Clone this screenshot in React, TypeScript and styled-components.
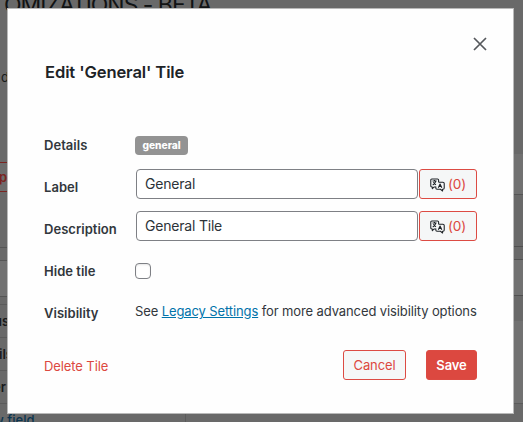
import React from 'react';
import styled, { createGlobalStyle } from 'styled-components';

const Global = createGlobalStyle`
  * { box-sizing: border-box; }
  html, body { margin: 0; padding: 0; overflow: hidden; background: #696969; }
  body { font-family: Inter, sans-serif; font-size: 13px; color: #32373c; }
`;

const Screen = styled.div`
  position: relative;
  width: 523px;
  height: 422px;
  overflow: hidden;
`;

const Page = styled.div`
  display: grid;
  grid-template-columns: 186px 1fr 30px;
  grid-template-rows: 33px 389px;
  height: 422px;
  background: #696969;
`;

const PageTitle = styled.div`
  grid-column: 1 / -1;
  height: 44px;
  margin-top: -10px;
  padding-left: 4px;
  border-bottom: 1px solid #4f4f4f;
  font-size: 23px;
  line-height: 31px;
  letter-spacing: -1.02px;
  white-space: nowrap;
  color: #111314;
`;

const Column = styled.div<{ $divided?: boolean }>`
  display: flex;
  flex-direction: column;
  overflow: hidden;
  border-right: ${p => (p.$divided ? '1px solid #5b5b5b' : '0')};
`;

const Band = styled.div<{ $h: number; $bg?: string; $line?: string }>`
  flex: none;
  height: ${p => p.$h}px;
  background: ${p => p.$bg || '#696969'};
  border-bottom: ${p => (p.$line ? `1px solid ${p.$line}` : '0')};
  line-height: ${p => p.$h}px;
  white-space: nowrap;
`;

const Clipped = styled.span<{ $shift?: number; $color?: string; $weight?: number }>`
  display: inline-block;
  margin-left: ${p => p.$shift || 0}px;
  color: ${p => p.$color || '#17191b'};
  font-weight: ${p => p.$weight || 400};
`;

const PageButton = styled.div`
  flex: none;
  height: 30px;
  width: 60px;
  border: 1px solid #7a2420;
  border-left: 0;
  background: #6d6d6d;
  color: #7a2420;
  line-height: 28px;
  font-weight: 600;
  text-indent: -1px;
`;

const Modal = styled.section`
  position: absolute;
  left: 7px;
  top: 8px;
  width: 507px;
  height: 406px;
  border: 1px solid #b9b9b9;
  background: #fefefe;
  padding: 27px 36px 0;
`;

const Close = styled.button`
  display: block;
  margin: 0 -11px 0 auto;
  width: 16px;
  height: 16px;
  padding: 0;
  border: 0;
  background: none;
`;

const Title = styled.h3`
  margin: 9px 0 43px 1px;
  height: 22px;
  font-size: 16.6px;
  line-height: 22px;
  font-weight: 600;
  letter-spacing: -0.13px;
  color: #1d2327;
`;

const Form = styled.div`
  margin-top: -4px;
`;

const Row = styled.div`
  display: grid;
  grid-template-columns: 91px 1fr;
  align-items: center;
  height: 42px;
`;

const RowLabel = styled.label`
  padding-top: 3px;
  font-weight: 600;
  letter-spacing: 0.03px;
`;

const Badge = styled.span`
  justify-self: start;
  height: 19px;
  width: 53px;
  margin-top: 5px;
  border-radius: 4px;
  background: #939393;
  color: #fff;
  font-size: 10.2px;
  font-weight: 800;
  line-height: 19px;
  text-align: center;
`;

const Field = styled.div`
  display: flex;
  gap: 1px;
  padding-left: 1px;
  margin-top: -2px;
`;

const Input = styled.input`
  width: 282px;
  height: 30px;
  padding: 0 8px 1px;
  border: 1px solid #7e8085;
  border-radius: 4px;
  background: #fff;
  color: #2c3338;
  font: 14px Inter, sans-serif;
  letter-spacing: -0.2px;
`;

const Button = styled.button<{ $primary?: boolean; $w: number }>`
  display: flex;
  align-items: center;
  justify-content: center;
  gap: 3px;
  width: ${p => p.$w}px;
  height: 30px;
  padding: 0;
  border: 1px solid #dc4b43;
  border-radius: 3px;
  background: ${p => (p.$primary ? '#dc4840' : '#f5f7f7')};
  color: ${p => (p.$primary ? '#fff' : '#dc4840')};
  font-family: Inter, sans-serif;
  font-size: 13px;
  font-weight: ${p => (p.$primary ? 600 : 400)};
  letter-spacing: -0.1px;
`;

const Count = styled.span`
  font-size: 13.6px;
`;

const Checkbox = styled.input`
  appearance: none;
  margin: 4px 0 0;
  width: 16px;
  height: 16px;
  border: 1px solid #7e8085;
  border-radius: 4px;
  background: #fff;
  box-shadow: inset 0 1px 2px rgba(0, 0, 0, 0.1);
`;

const Note = styled.p`
  margin: 0;
  letter-spacing: -0.11px;
  white-space: nowrap;
`;

const Link = styled.a`
  color: #0073aa;
  text-decoration: underline;
`;

const Footer = styled.div`
  display: flex;
  align-items: center;
  gap: 20px;
  margin-top: 18px;
`;

const Delete = styled.a`
  margin-right: auto;
  padding-top: 2px;
  color: #dc4840;
  letter-spacing: -0.1px;
`;

const Glyph = styled.svg`
  margin-top: 2px;
`;

const TranslateIcon = () => (
  <Glyph width="15" height="14" viewBox="0 0 15.5 14" fill="none" stroke="#1d2327" strokeWidth="1.1" strokeLinejoin="round">
    <path d="M5.8 9H4.4L2.4 10.8V9H1.9Q.8 9 .8 7.9V1.9Q.8.8 1.9.8H7.8Q8.9.8 8.9 1.9V4.2" />
    <path d="M8.9 4.2H13.4Q14.7 4.2 14.7 5.5V10.2Q14.7 11.4 13.5 11.4H13V13.2L10.8 11.4H7.2Q6 11.4 6 10.2V8.6" />
    <path d="M2.6 2.9H6.8M4.7 1.9V2.9M6 2.9Q5.4 5.6 2.8 7M3.5 4.2Q4.3 5.9 6.2 6.7" />
    <path d="M8.6 9.9L10.4 5.9L12.2 9.9M9.2 8.6H11.6" />
  </Glyph>
);

const TranslateField = ({ value }: { value: string }) => (
  <Field>
    <Input readOnly value={value} />
    <Button $w={58}>
      <TranslateIcon />
      <Count>(0)</Count>
    </Button>
  </Field>
);

export default function App() {
  return (
    <>
      <Global />
      <Screen>
        <Page>
          <PageTitle>OMIZATIONS - BETA</PageTitle>
          <Column $divided>
            <Band $h={88}><Clipped $shift={1}>d</Clipped></Band>
            <Band $h={41} />
            <PageButton>p</PageButton>
            <Band $h={56} $line="#555" />
            <Band $h={13} $line="#555" />
            <Band $h={36} $bg="#717171" $line="#555" />
            <Band $h={8} $line="#5b5b5b" />
            <Band $h={33} $line="#5b5b5b"><Clipped $shift={-6} $weight={600}>us</Clipped></Band>
            <Band $h={33} $line="#5b5b5b"><Clipped $shift={-1} $weight={600}>ils</Clipped></Band>
            <Band $h={33} $line="#5b5b5b"><Clipped $shift={-7} $weight={600}>er</Clipped></Band>
            <Band $h={33}><Clipped $shift={-7} $color="#0b3550" $weight={500}>w field</Clipped></Band>
          </Column>
          <Column />
          <Column>
            <Band $h={121} />
            <Band $h={41} $bg="#717171" $line="#555" />
            <Band $h={52} $line="#505050" />
            <Band $h={13} $line="#505050" />
            <Band $h={36} $bg="#717171" $line="#505050" />
            <Band $h={25} />
            <Band $h={83} $bg="#717171" $line="#5b5b5b" />
          </Column>
        </Page>
        <Modal>
          <Close aria-label="Close">
            <svg width="16" height="16" viewBox="0 0 16 16" stroke="#55585c" strokeWidth="1.7" fill="none">
              <path d="M2 2L14 14M14 2L2 14" />
            </svg>
          </Close>
          <Title>Edit 'General' Tile</Title>
          <Form>
            <Row>
              <RowLabel>Details</RowLabel>
              <Badge>general</Badge>
            </Row>
            <Row>
              <RowLabel>Label</RowLabel>
              <TranslateField value="General" />
            </Row>
            <Row>
              <RowLabel>Description</RowLabel>
              <TranslateField value="General Tile" />
            </Row>
            <Row>
              <RowLabel>Hide tile</RowLabel>
              <Checkbox type="checkbox" />
            </Row>
            <Row>
              <RowLabel>Visibility</RowLabel>
              <Note>See <Link>Legacy Settings</Link> for more advanced visibility options</Note>
            </Row>
          </Form>
          <Footer>
            <Delete>Delete Tile</Delete>
            <Button $w={63}>Cancel</Button>
            <Button $primary $w={51}>Save</Button>
          </Footer>
        </Modal>
      </Screen>
    </>
  );
}
